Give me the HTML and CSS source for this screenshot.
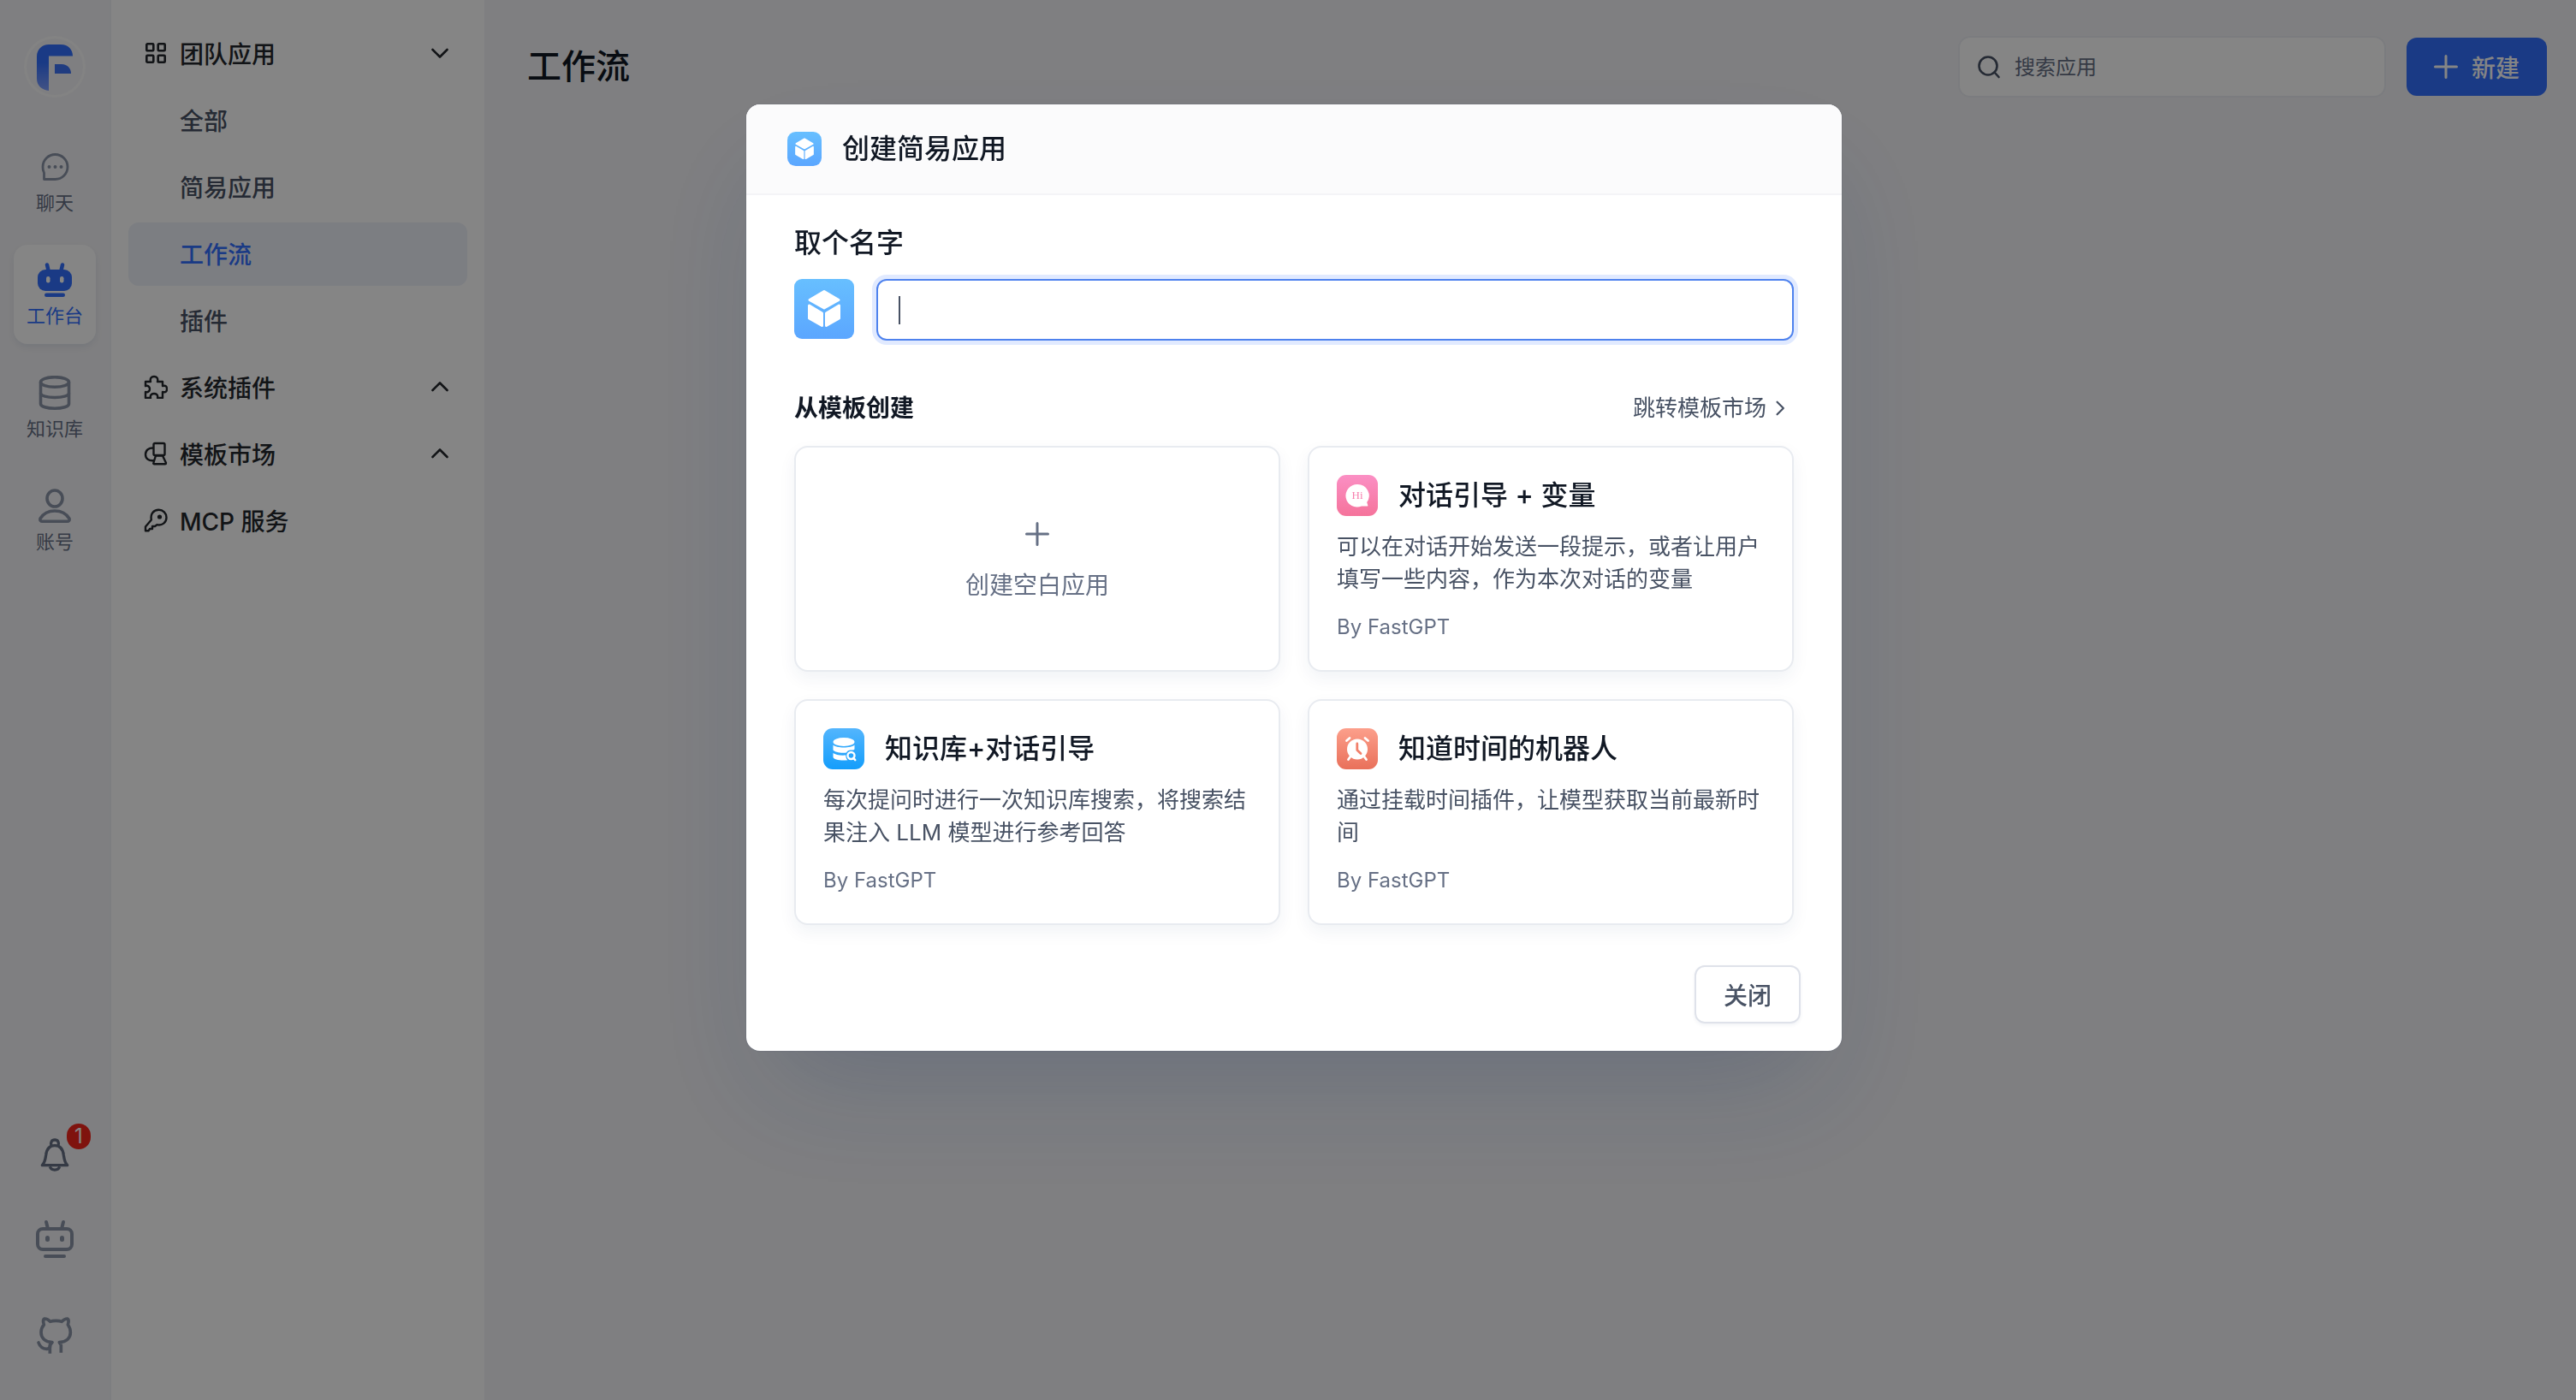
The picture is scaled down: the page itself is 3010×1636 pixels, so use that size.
FILE: index.html
```html
<!DOCTYPE html>
<html lang="zh-CN">
<head>
  <meta charset="UTF-8" />
  <meta name="viewport" content="width=device-width, initial-scale=1.0"/>
  <title>工作流 - FastGPT</title>
  <link rel="stylesheet" href="styles.css">
</head>
<body>

  <!-- shared symbols -->
  <svg class="defs" aria-hidden="true">
    <defs>
      <linearGradient id="logoFill" x1="0" y1="0" x2="0" y2="1">
        <stop offset="0.4" stop-color="#3370ff"/>
        <stop offset="1" stop-color="#7f9fff"/>
      </linearGradient>
      <linearGradient id="blueFill" x1="0" y1="0" x2="0" y2="1">
        <stop offset="0" stop-color="#67bfff"/>
        <stop offset="1" stop-color="#5ba6ff"/>
      </linearGradient>
      <linearGradient id="pinkFill" x1="0" y1="0" x2="0" y2="1">
        <stop offset="0" stop-color="#fb8fc4"/>
        <stop offset="1" stop-color="#f5739b"/>
      </linearGradient>
      <linearGradient id="skyFill" x1="0" y1="0" x2="0" y2="1">
        <stop offset="0" stop-color="#53b5fd"/>
        <stop offset="1" stop-color="#149dfb"/>
      </linearGradient>
      <linearGradient id="orangeFill" x1="0" y1="0" x2="0" y2="1">
        <stop offset="0" stop-color="#fc9f8b"/>
        <stop offset="1" stop-color="#e9705a"/>
      </linearGradient>
    </defs>
    <symbol id="cube" viewBox="0 0 70 70">
      <g fill="#fff" stroke="#fff" stroke-width="3" stroke-linejoin="round">
        <path d="M35 14.500L52 24.500L35 34L18 24.500Z"/>
        <path d="M17.500 31L32.500 40V54.500L17.500 46Z"/>
        <path d="M52.500 31L37.500 40V54.500L52.500 46Z"/>
      </g>
    </symbol>
    <symbol id="chevron" viewBox="0 0 28 28">
      <path d="M5.500 10L14 18.500L22.500 10" fill="none" stroke="currentColor" stroke-width="2.600" stroke-linecap="round" stroke-linejoin="round"/>
    </symbol>
    <symbol id="plus" viewBox="0 0 28 28">
      <path d="M14 1.500V26.500M1.500 14H26.500" fill="none" stroke="currentColor" stroke-width="3" stroke-linecap="round"/>
    </symbol>
  </svg>

  <div class="app">
    <aside class="rail">
      <div class="logo">
        <svg viewBox="0 0 72 72">
          <path fill="url(#logoFill)" d="M15 24C15 16 21 10 29 10H43C52 10 57 16 57 23.500H29V64C21 63 15 58 15 50Z"/>
          <path fill="#3f74f5" d="M36 33H44C51 33 55 38 55 44H36Z"/>
        </svg>
      </div>

      <nav class="rail-nav">
        <a class="rail-item" href="#">
          <svg viewBox="0 0 40 40" fill="none" stroke="currentColor" stroke-width="2.800" stroke-linejoin="round">
            <path d="M6 20A14.500 14.500 0 1 1 20.500 34.500H7.500V27A14.500 14.500 0 0 1 6 20Z"/>
            <g fill="currentColor" stroke="none"><circle cx="13.500" cy="20" r="2"/><circle cx="20.500" cy="20" r="2"/><circle cx="27.500" cy="20" r="2"/></g>
          </svg>
          <span>聊天</span>
        </a>
        <a class="rail-item active" href="#">
          <svg viewBox="0 0 40 40">
            <path d="M11 2.500L12.500 9M29 2.500L27.500 9" stroke="currentColor" stroke-width="4.500" stroke-linecap="round"/>
            <rect x="0" y="8" width="40" height="25" rx="9" fill="currentColor"/>
            <rect x="8" y="35.500" width="24" height="4.500" rx="2.200" fill="currentColor"/>
            <rect x="10" y="16" width="4.500" height="7.500" rx="2.200" fill="#fff"/>
            <rect x="26" y="16" width="4.500" height="7.500" rx="2.200" fill="#fff"/>
          </svg>
          <span>工作台</span>
        </a>
        <a class="rail-item" href="#">
          <svg viewBox="0 0 40 40" fill="none" stroke="currentColor" stroke-width="3.600">
            <ellipse cx="20" cy="7.500" rx="16.500" ry="5.800"/>
            <path d="M3.500 7.500V33C3.500 36 11 38.200 20 38.200C29 38.200 36.500 36 36.500 33V7.500"/>
            <path d="M3.500 20.500C3.500 23.500 11 25.500 20 25.500C29 25.500 36.500 23.500 36.500 20.500"/>
          </svg>
          <span>知识库</span>
        </a>
        <a class="rail-item" href="#">
          <svg viewBox="0 0 40 40" fill="none" stroke="currentColor" stroke-width="3.600" stroke-linejoin="round">
            <ellipse cx="20" cy="11.500" rx="9" ry="9.500"/>
            <path d="M3 35C7 28.500 13 26 20 26C27 26 33 28.500 37 35C37.500 37 36.500 38.200 34.500 38.200H5.500C3.500 38.200 2.500 37 3 35Z"/>
          </svg>
          <span>账号</span>
        </a>
      </nav>

      <div class="rail-foot">
        <button class="rail-btn bell" aria-label="通知">
          <svg width="36" height="42" viewBox="0 0 108 126" fill="none" stroke="currentColor" stroke-width="10" stroke-linejoin="round">
            <path d="M42 30C38 18 43 9 54 9C65 9 70 18 66 30"/>
            <path d="M10 98H98C87 86 87 74 85 62C82 40 72 29 54 29C36 29 26 40 23 62C21 74 21 86 10 98Z"/>
            <path d="M37 103C42 118 66 118 71 103"/>
          </svg>
          <span class="badge">1</span>
        </button>
        <button class="rail-btn" aria-label="机器人">
          <svg width="44" height="46" viewBox="0 0 44 46" fill="none" stroke="currentColor" stroke-width="4" stroke-linecap="round">
            <path d="M12 3L13.500 9M32 3L30.500 9"/>
            <rect x="2" y="11" width="40" height="24" rx="6"/>
            <path d="M11 43H33"/>
            <path d="M13.500 21.500V23.500M30.500 21.500V23.500" stroke-width="5"/>
          </svg>
        </button>
        <button class="rail-btn github" aria-label="GitHub">
          <svg width="44" height="46" viewBox="0 0 132 138" fill="none" stroke="currentColor" stroke-width="11" stroke-linejoin="round">
            <path d="M9 96C14 110 24 118 38 118C46 118 50 114 50 106" stroke-linecap="round"/>
            <path d="M49 134V104L57 95C32 93 18 80 18 60C18 48 21 41 28 33C25 24 25 14 30 12C37 12 45 16 50 22C60 18 80 18 90 22C96 16 104 12 110 12C115 14 115 24 112 33C118 41 121 48 121 60C121 80 107 93 82 95L88 104V131"/>
          </svg>
        </button>
      </div>
    </aside>

    <nav class="sidebar">
      <a class="menu-item" href="#">
        <svg class="icon" viewBox="0 0 28 28" fill="none" stroke="currentColor" stroke-width="2.600">
          <rect x="3.300" y="3.300" width="8" height="8" rx="1"/><rect x="16.700" y="3.300" width="8" height="8" rx="1"/>
          <rect x="3.300" y="16.700" width="8" height="8" rx="1"/><rect x="16.700" y="16.700" width="8" height="8" rx="1"/>
        </svg>
        <span>团队应用</span>
        <svg class="arrow"><use href="#chevron"/></svg>
      </a>
      <a class="menu-item sub" href="#">全部</a>
      <a class="menu-item sub" href="#">简易应用</a>
      <a class="menu-item sub active" href="#">工作流</a>
      <a class="menu-item sub" href="#">插件</a>
      <a class="menu-item" href="#">
        <svg class="icon" viewBox="0 0 28 28" fill="none" stroke="currentColor" stroke-width="2.400" stroke-linejoin="round">
          <path d="M2 8H8C7 4 9 2 12 2C15 2 17 4 16 8H22V13C26 12 27 14 27 16.500C27 19 26 21 22 20V27H16C17 23 14 22 12 22C10 22 7 23 8 27H2V20C5 21 7 19 7 16.500C7 14 5 12 2 13Z"/>
        </svg>
        <span>系统插件</span>
        <svg class="arrow up"><use href="#chevron"/></svg>
      </a>
      <a class="menu-item" href="#">
        <svg class="icon" viewBox="0 0 28 28" fill="none" stroke="currentColor" stroke-width="2.400" stroke-linejoin="round">
          <rect x="11.500" y="2" width="13" height="14" rx="1.500"/>
          <path d="M14 16.500H22L26 25C26 26 25.500 26.300 25 26.300H12C11.300 26.300 11 25.500 11.300 25Z"/>
          <path d="M11.500 7.500C6 7 2 10 2 15C2 20 6 23 12 22"/>
        </svg>
        <span>模板市场</span>
        <svg class="arrow up"><use href="#chevron"/></svg>
      </a>
      <a class="menu-item" href="#">
        <svg class="icon" viewBox="0 0 28 28" fill="none" stroke="currentColor" stroke-width="2.400" stroke-linejoin="round">
          <path d="M8.800 13.500C7.500 6.500 11.500 1.800 17.500 1.800C22.500 1.800 26.500 5.800 26.500 10.800C26.500 16.500 21.500 20.500 15.500 19.200L13 21H10V24H7L5.500 26.300H2V21.500Z"/>
          <circle cx="18.500" cy="10" r="2.600" fill="currentColor" stroke="none"/>
        </svg>
        <span>MCP 服务</span>
      </a>
    </nav>

    <main class="main">
      <header class="topbar">
        <h1>工作流</h1>
        <label class="search">
          <svg viewBox="0 0 28 28" fill="none" stroke="currentColor" stroke-width="2.600" stroke-linecap="round">
            <circle cx="13" cy="13" r="10.500"/><path d="M20.500 20.500L25.500 26"/>
          </svg>
          <input type="text" placeholder="搜索应用" aria-label="搜索应用">
        </label>
        <button class="btn-new">
          <svg><use href="#plus"/></svg>
          新建
        </button>
      </header>
    </main>
  </div>

  <div class="overlay">
    <section class="modal" role="dialog" aria-modal="true" aria-labelledby="modalTitle">
      <header class="modal-header">
        <svg class="cube" viewBox="0 0 70 70"><rect width="70" height="70" rx="17" fill="url(#blueFill)"/><use href="#cube"/></svg>
        <h2 id="modalTitle">创建简易应用</h2>
      </header>

      <div class="modal-body">
        <label class="name-label" for="appName">取个名字</label>
        <div class="name-row">
          <svg class="avatar" viewBox="0 0 70 70"><rect width="70" height="70" rx="9" fill="url(#blueFill)"/><use href="#cube"/></svg>
          <div class="name-field">
            <input id="appName" type="text">
            <span class="caret"></span>
          </div>
        </div>

        <div class="section-head">
          <h3>从模板创建</h3>
          <a href="#">跳转模板市场 <svg><use href="#chevron"/></svg></a>
        </div>

        <div class="cards">
          <button class="card blank">
            <svg><use href="#plus"/></svg>
            <span>创建空白应用</span>
          </button>

          <article class="card">
            <div class="card-title">
              <svg viewBox="0 0 48 48">
                <rect width="48" height="48" rx="11" fill="url(#pinkFill)"/>
                <path fill="#fff" d="M24 11A13.300 13.300 0 1 0 29 36.500H35.500C36.200 36.500 36.500 36 36.300 35.400L35.200 32A13.300 13.300 0 0 0 24 11Z"/>
                <text class="hi" x="24" y="28" text-anchor="middle">Hi</text>
              </svg>
              <h4>对话引导 + 变量</h4>
            </div>
            <p class="desc">可以在对话开始发送一段提示，或者让用户填写一些内容，作为本次对话的变量</p>
            <p class="author">By FastGPT</p>
          </article>

          <article class="card">
            <div class="card-title">
              <svg viewBox="0 0 48 48">
                <rect width="48" height="48" rx="11" fill="url(#skyFill)"/>
                <g fill="#fff">
                  <ellipse cx="24" cy="16" rx="12.500" ry="5"/>
                  <path d="M11.500 19.500C15 23.500 33 23.500 36.500 19.500V24.500C35 26 33.500 25.500 32 25.500C29.500 25.500 28 26.800 27 28.500C20 29.200 13.500 28 11.500 25.500Z"/>
                  <path d="M11.500 29C14 31 20 32 26.300 31.500C26.200 34 27 36 28.500 37.300C21 38.200 11.500 37 11.500 33.500Z"/>
                </g>
                <circle cx="32.500" cy="32" r="4" fill="none" stroke="#fff" stroke-width="2.400"/>
                <path d="M35.200 34.800L37.200 37" stroke="#fff" stroke-width="2.600" stroke-linecap="round"/>
              </svg>
              <h4>知识库+对话引导</h4>
            </div>
            <p class="desc">每次提问时进行一次知识库搜索，将搜索结果注入 LLM 模型进行参考回答</p>
            <p class="author">By FastGPT</p>
          </article>

          <article class="card">
            <div class="card-title">
              <svg viewBox="0 0 48 48">
                <rect width="48" height="48" rx="11" fill="url(#orangeFill)"/>
                <g stroke="#fff" stroke-width="2.800" stroke-linecap="round">
                  <path d="M11.500 14.500L15 11.500M36.500 14.500L33 11.500M16 33L13.500 36.500M32 33L34.500 36.500"/>
                </g>
                <circle cx="24" cy="24.500" r="12" fill="#fff"/>
                <path d="M23.800 18V25.500L28 29.500" fill="none" stroke="#f2806b" stroke-width="2.800" stroke-linecap="round" stroke-linejoin="round"/>
              </svg>
              <h4>知道时间的机器人</h4>
            </div>
            <p class="desc">通过挂载时间插件，让模型获取当前最新时间</p>
            <p class="author">By FastGPT</p>
          </article>
        </div>
      </div>

      <footer class="modal-footer">
        <button class="btn-close">关闭</button>
      </footer>
    </section>
  </div>

</body>
</html>
```
FILE: styles.css
```css
* {
  box-sizing: border-box;
  margin: 0;
  padding: 0;
}

body {
  font-family: Inter, 'Noto Sans CJK SC', sans-serif;
  font-size: 28px;
  color: #111824;
  background: #f4f4f7;
}

a {
  color: inherit;
  text-decoration: none;
}

button, input {
  font: inherit;
  color: inherit;
  border: none;
  background: none;
}

button {
  cursor: pointer;
}

svg {
  display: block;
  flex-shrink: 0;
}

.defs {
  position: absolute;
  width: 0;
  height: 0;
}

.app {
  display: flex;
  min-height: 100vh;
}

/* left rail */
.rail {
  width: 130px;
  padding: 42px 0 53px;
  display: flex;
  flex-direction: column;
  align-items: center;
  border-right: 2px solid #f0f1f6;
}

.logo {
  width: 72px;
  height: 72px;
  border-radius: 50%;
  box-shadow: inset 0 0 0 3px #fbfbfc;
  margin-bottom: 40px;
}

.rail-nav {
  display: flex;
  flex-direction: column;
  gap: 16px;
}

.rail-item {
  width: 96px;
  height: 116px;
  padding-top: 21px;
  display: flex;
  flex-direction: column;
  align-items: center;
  gap: 6px;
  border-radius: 16px;
  color: #8a95a7;
  font-size: 22px;
  line-height: 32px;
}

.rail-item svg {
  width: 40px;
  height: 40px;
}

.rail-item span {
  color: #667085;
}

.rail-item.active {
  background: #fff;
  box-shadow: 0 4px 8px rgba(19, 51, 107, 0.08);
}

.rail-item.active,
.rail-item.active span {
  color: #3370ff;
}

.rail-foot {
  margin-top: auto;
  display: flex;
  flex-direction: column;
  align-items: center;
  gap: 54px;
}

.rail-btn {
  position: relative;
  color: #8a95a7;
}

.bell {
  color: #667085;
}

.github {
  margin-top: 12px;
}

.badge {
  position: absolute;
  top: -16px;
  right: -24px;
  width: 28px;
  height: 30px;
  border-radius: 15px;
  background: #f3261c;
  color: #fff;
  font-size: 24px;
  line-height: 30px;
}

/* app menu */
.sidebar {
  width: 436px;
  padding: 26px 20px;
  display: flex;
  flex-direction: column;
  gap: 4px;
  background: #fff;
}

.menu-item {
  height: 74px;
  padding: 0 18px 2px;
  display: flex;
  align-items: center;
  gap: 14px;
  border-radius: 12px;
  font-weight: 500;
  color: #24282c;
}

.menu-item.sub {
  padding-left: 60px;
  color: #485264;
}

.menu-item.active {
  background: #edf1f9;
  color: #3370ff;
}

.menu-item .icon,
.menu-item .arrow {
  width: 28px;
  height: 28px;
}

.menu-item .arrow {
  margin-left: auto;
}

.menu-item .up {
  transform: rotate(180deg);
}

/* main */
.main {
  flex: 1;
}

.topbar {
  display: flex;
  align-items: center;
  gap: 26px;
  padding: 44px 34px 0 50px;
}

.topbar h1 {
  flex: 1;
  font-size: 40px;
  font-weight: 500;
  line-height: 68px;
}

.search {
  width: 496px;
  height: 68px;
  padding: 0 20px;
  display: flex;
  align-items: center;
  gap: 16px;
  border-radius: 12px;
  background: #fff;
  box-shadow: 0 0 0 2px #eceef3;
  font-size: 24px;
  color: #485264;
}

.search svg {
  width: 28px;
  height: 28px;
}

.search input {
  flex: 1;
  min-width: 0;
  outline: none;
}

.search input::placeholder {
  color: #667085;
}

.btn-new {
  height: 68px;
  padding: 0 32px;
  display: flex;
  align-items: center;
  gap: 16px;
  border-radius: 12px;
  background: #3370ff;
  color: #fff;
  font-weight: 500;
}

.btn-new svg {
  width: 28px;
  height: 28px;
}

/* modal */
.overlay {
  position: fixed;
  inset: 0;
  padding: 122px 0 0 14px;
  display: flex;
  justify-content: center;
  align-items: flex-start;
  background: rgba(0, 0, 0, 0.48);
}

.modal {
  width: 1280px;
  max-width: 90vw;
  border-radius: 16px;
  overflow: hidden;
  background: #fff;
  box-shadow: 0 64px 128px -24px rgba(19, 51, 107, 0.2), 0 0 2px rgba(19, 51, 107, 0.2);
}

.modal-header {
  height: 106px;
  padding: 0 48px;
  display: flex;
  align-items: center;
  gap: 24px;
  background: #fbfbfc;
  border-bottom: 2px solid #f4f4f7;
}

.modal-header h2 {
  font-size: 32px;
  font-weight: 500;
  line-height: 40px;
}

.cube {
  width: 40px;
  height: 40px;
}

.modal-body {
  padding: 32px 56px 47px;
}

.name-label {
  display: block;
  font-size: 32px;
  font-weight: 500;
  line-height: 48px;
}

.name-row {
  display: flex;
  align-items: flex-start;
  gap: 26px;
  margin-top: 18px;
}

.avatar {
  width: 70px;
  height: 70px;
}

.name-field {
  position: relative;
  flex: 1;
}

.name-field input {
  display: block;
  width: 100%;
  height: 72px;
  padding: 0 24px;
  border: 2px solid #4e82ee;
  border-radius: 12px;
  outline: none;
  box-shadow: 0 0 0 5px #e1eaff;
}

.caret {
  position: absolute;
  left: 26px;
  top: 20px;
  width: 2px;
  height: 33px;
  background: #485264;
}

.section-head {
  display: flex;
  justify-content: space-between;
  align-items: center;
  margin: 59px 0 24px;
  line-height: 40px;
}

.section-head h3 {
  font-size: 28px;
  font-weight: 700;
}

.section-head a {
  display: flex;
  align-items: center;
  gap: 4px;
  padding-right: 4px;
  font-size: 26px;
  color: #485264;
}

.section-head svg {
  width: 24px;
  height: 24px;
  transform: rotate(-90deg);
}

.cards {
  display: grid;
  grid-template-columns: 1fr 1fr;
  gap: 32px;
}

.card {
  min-height: 264px;
  padding: 32px;
  border: 2px solid #e8ebf0;
  border-radius: 16px;
  background: #fff;
  box-shadow: 0 8px 20px rgba(19, 51, 107, 0.06);
}

.blank {
  display: flex;
  flex-direction: column;
  align-items: center;
  justify-content: center;
  gap: 26px;
  padding-top: 40px;
  color: #667085;
  line-height: 40px;
}

.blank svg {
  width: 28px;
  height: 28px;
}

.card-title {
  display: flex;
  align-items: center;
  gap: 24px;
}

.card-title svg {
  width: 48px;
  height: 48px;
}

.card-title h4 {
  font-size: 32px;
  font-weight: 500;
  line-height: 48px;
}

.hi {
  font-family: 'Liberation Serif', serif;
  font-size: 13px;
  fill: #f77fae;
}

.desc {
  min-height: 76px;
  margin-top: 17px;
  font-size: 26px;
  line-height: 38px;
  color: #485264;
}

.author {
  margin-top: 21px;
  font-size: 24px;
  line-height: 32px;
  color: #667085;
}

.modal-footer {
  display: flex;
  justify-content: flex-end;
  padding: 0 48px 32px;
}

.btn-close {
  height: 68px;
  padding: 0 32px;
  border: 2px solid #dfe2ea;
  border-radius: 12px;
  box-shadow: 0 2px 4px rgba(19, 51, 107, 0.06);
  font-weight: 500;
  color: #485264;
}
```
